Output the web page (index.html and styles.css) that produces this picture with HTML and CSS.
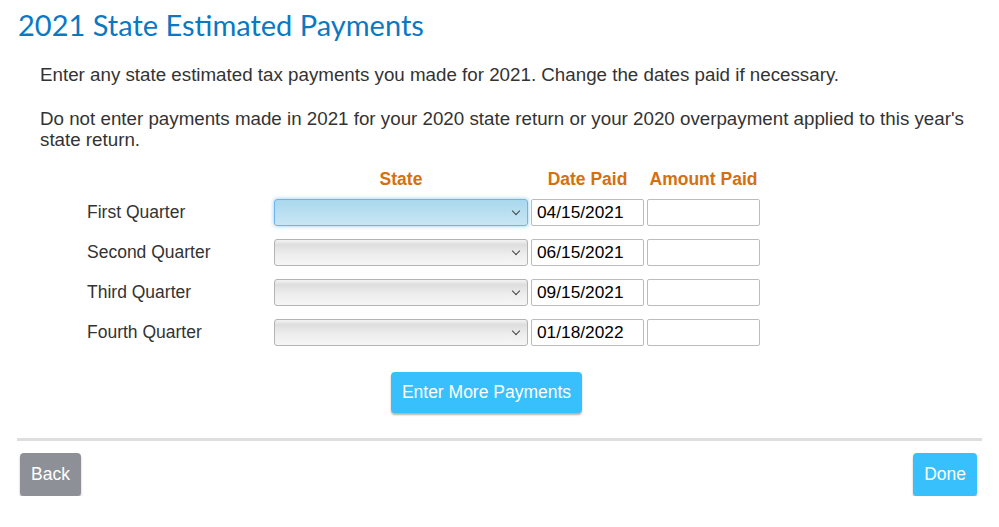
FILE: index.html
```html
<!DOCTYPE html>
<html>
<head>
	<title>2021 State Estimated Payments</title>
	<meta charset=utf-8>
	<link rel="stylesheet" href="styles.css">
</head>
<body>
	<div class="page">
		<h1 class="title">2021 State Estimated Payments</h1>
		<div class="content">
			<p class="intro">Enter any state estimated tax payments you made for 2021. Change the dates paid if necessary.</p>
			<p class="intro">Do not enter payments made in 2021 for your 2020 state return or your 2020 overpayment applied to this year's state return.</p>

			<div class="grid">
				<div></div>
				<div class="head">State</div>
				<div class="head">Date Paid</div>
				<div class="head">Amount Paid</div>

				<div class="label">First Quarter</div>
				<div class="select focus"><span class="chev"></span></div>
				<input class="field" type="text" value="04/15/2021">
				<input class="field" type="text" value="">

				<div class="label">Second Quarter</div>
				<div class="select"><span class="chev"></span></div>
				<input class="field" type="text" value="06/15/2021">
				<input class="field" type="text" value="">

				<div class="label">Third Quarter</div>
				<div class="select"><span class="chev"></span></div>
				<input class="field" type="text" value="09/15/2021">
				<input class="field" type="text" value="">

				<div class="label">Fourth Quarter</div>
				<div class="select"><span class="chev"></span></div>
				<input class="field" type="text" value="01/18/2022">
				<input class="field" type="text" value="">
			</div>

			<div class="more-row">
				<button class="btn blue more">Enter More Payments</button>
			</div>
		</div>

		<div class="footer">
			<button class="btn gray">Back</button>
			<button class="btn blue">Done</button>
		</div>
	</div>
</body>
</html>
```

FILE: styles.css
```css
body{
	margin:0;
	font-family: "Liberation Sans", Arial, sans-serif;
	color:#333;
	background:#fff;
}
.page{
	padding: 0 17px;
}
.title{
	margin:0;
	padding: 9px 0 0 1px;
	font-family: Lato, "Open Sans", sans-serif;
	font-weight: normal;
	font-size: 29px;
	line-height: 32px;
	color: #0b78c2;
}
.content{
	padding: 0 0 0 23px;
}
.intro{
	margin: 23px 0 0 0;
	font-size: 18.75px;
	line-height: 21px;
}

.grid{
	display: grid;
	grid-template-columns: 187px 254px 113px 113px;
	column-gap: 3px;
	row-gap: 13px;
	margin: 19px 0 0 44px;
	align-items: center;
}
.head{
	color:#d4700e;
	font-weight: bold;
	font-size: 17.5px;
	text-align: center;
	line-height: 20px;
	margin-bottom: -3px;
}
.label{
	font-size: 17.5px;
	color:#333;
	padding-left: 3px;
}
.select{
	position: relative;
	height: 27px;
	box-sizing: border-box;
	border: 1px solid #b4b4b4;
	border-radius: 3px;
	background: linear-gradient(#f4f4f4, #dedede 18%, #eeeeee 60%, #f6f6f6);
}
.select.focus{
	border-color: #6db5ea;
	background: linear-gradient(#a9d8ee, #c9e6f3);
	box-shadow: 0 0 4px #8cc8f2;
}
.chev{
	position: absolute;
	right: 8px;
	top: 8px;
	width: 5px;
	height: 5px;
	border-right: 1px solid #444;
	border-bottom: 1px solid #444;
	transform: rotate(45deg);
}
.field{
	height: 27px;
	box-sizing: border-box;
	border: 1px solid #bcbcbc;
	border-radius: 2px;
	padding: 0 0 0 5px;
	font-family: "Liberation Sans", Arial, sans-serif;
	font-size: 17.3px;
	color:#000;
	width: 113px;
	margin: 0;
}

.more-row{
	display: flex;
	justify-content: center;
	margin: 26px 0 0 0;
}
.btn{
	border: none;
	border-radius: 4px;
	color:#fff;
	font-family: "Liberation Sans", Arial, sans-serif;
	font-size: 17.5px;
	height: 43px;
	padding: 0 11px;
	box-shadow: 0 2px 2px rgba(0,0,0,0.3);
}
.blue{
	background:#37c0fb;
}
.gray{
	background:#8e9097;
}
.more{
	height: 41px;
	margin-left: -49px;
}

.footer{
	margin-top: 25px;
	border-top: 3px solid #dedede;
	padding: 12px 5px 0 3px;
	display: flex;
	justify-content: space-between;
}
```
